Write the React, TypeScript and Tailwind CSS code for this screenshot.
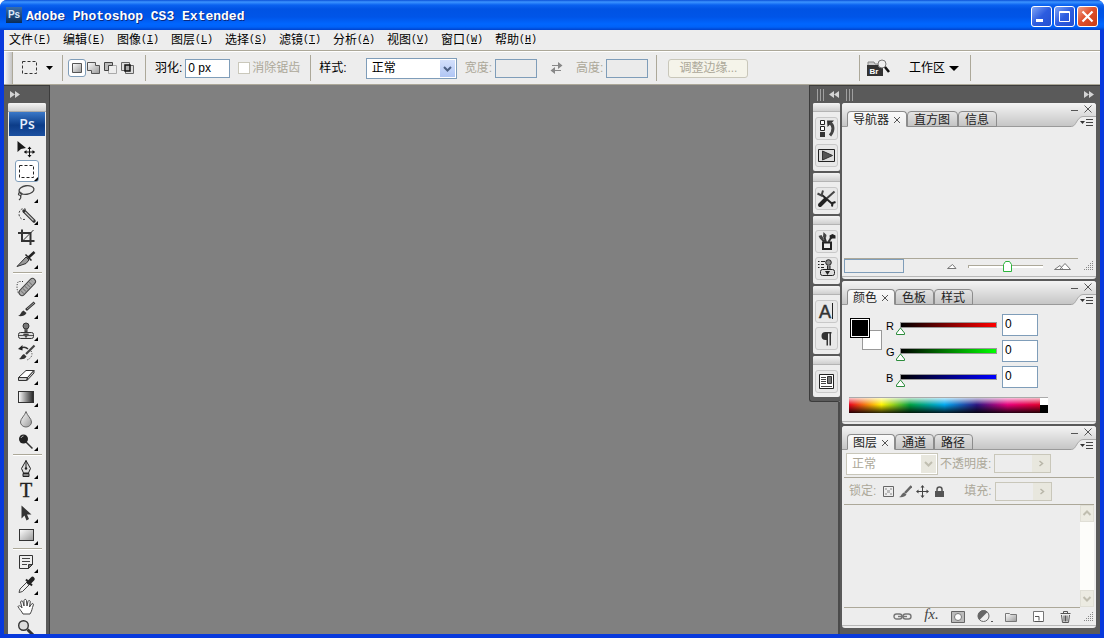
import React, { useState } from 'react';

const GRIP = 'bg-[linear-gradient(to_bottom,#f4f4f4,#cfcfcf)]';

const TOOLS: { name: string; corner: boolean; icon: React.ReactNode }[][] = [
  [
    {
      name: 'Move',
      corner: false,
      icon: (
        <>
          <path d="M2.500 3v11l3.500-3 5-1z" fill="#1a1a1a" />
          <path d="M14.500 9v10M9.500 14h10" stroke="#111" />
          <path d="M14.500 8.500l-2 2.500h4zM14.500 19.500l-2-2.500h4zM9 14l2.500-2v4zM20 14l-2.500-2v4z" fill="#111" />
        </>
      ),
    },
    {
      name: 'Marquee',
      corner: true,
      icon: <path d="M4.500 5.500h14v12h-14z" fill="none" stroke="#222" strokeDasharray="3 2" />,
    },
    {
      name: 'Lasso',
      corner: true,
      icon: (
        <>
          <ellipse cx="11.500" cy="8" rx="7.500" ry="4.300" fill="none" stroke="#444" strokeWidth="1.300" transform="rotate(-8 11.500 8)" />
          <path d="M5.500 10c-3 1-2.500 3.500 0 3.200 2.500-.4 1.500-3-.7-1.700M5.500 13.200c.8 1.800.3 3.300-1.500 4.800" fill="none" stroke="#444" strokeWidth="1.200" />
        </>
      ),
    },
    {
      name: 'Quick Selection',
      corner: true,
      icon: (
        <>
          <path d="M11 5.500c-3-2-7 0-7 4.500s4 6.500 7 5" fill="none" stroke="#444" strokeDasharray="2 1.500" />
          <path d="M9 7l10 10" stroke="#333" strokeWidth="3.400" strokeLinecap="round" />
          <path d="M10 8l8.500 8.500" stroke="#ccc" strokeWidth="1.300" />
        </>
      ),
    },
    {
      name: 'Crop',
      corner: false,
      icon: (
        <>
          <path d="M7 3.500v11.500h12.500M3 7h12.500v12" fill="none" stroke="#333" strokeWidth="2" />
          <path d="M18.500 4L8 14.500" stroke="#333" />
        </>
      ),
    },
    {
      name: 'Slice',
      corner: true,
      icon: (
        <>
          <path d="M2 18.500L11 9l3 3-3 3.500z" fill="#999" stroke="#333" />
          <path d="M13 10l6.500-6" stroke="#222" strokeWidth="2.600" />
          <path d="M10.500 6.500l6 6" stroke="#222" strokeWidth="1.500" />
        </>
      ),
    },
  ],
  [
    {
      name: 'Healing Brush',
      corner: true,
      icon: (
        <>
          <path d="M8 5.500H3.500c-2 2-2 8 0 12" fill="none" stroke="#222" strokeDasharray="1 1.500" />
          <path d="M7 16.500L17.500 5.500" stroke="#444" strokeWidth="7" strokeLinecap="round" />
          <path d="M7 16.500L17.500 5.500" stroke="#aaa" strokeWidth="5" strokeLinecap="round" />
          <path d="M7 16.500L17.500 5.500" stroke="#777" strokeWidth="4" strokeDasharray="1 2" />
        </>
      ),
    },
    {
      name: 'Brush',
      corner: true,
      icon: (
        <>
          <path d="M19.500 4.500L11 12" stroke="#333" strokeWidth="2.600" />
          <path d="M19 5l-7 6" stroke="#bbb" strokeWidth=".8" />
          <path d="M3 18c3-1 2.500-4 5.500-5.500L11.500 15c-1.500 3-5 3.500-8.500 3z" fill="#333" />
        </>
      ),
    },
    {
      name: 'Clone Stamp',
      corner: true,
      icon: (
        <>
          <circle cx="11" cy="6" r="3" fill="#777" stroke="#333" />
          <path d="M10 9v3h2V9" fill="#777" stroke="#333" />
          <rect x="3.500" y="12.500" width="15" height="6" rx="2" fill="#ddd" stroke="#333" />
          <path d="M4 15.500h14M8.500 14h5L11 17.500z" fill="#222" stroke="#555" />
        </>
      ),
    },
    {
      name: 'History Brush',
      corner: true,
      icon: (
        <>
          <path d="M19.500 3.500L11 12" stroke="#444" strokeWidth="2.200" />
          <path d="M4 17c2-1 2.500-4 5-5l2.500 2.500c-1.500 3-5 3-7.500 2.500z" fill="#333" />
          <path d="M13 7c-2-2-5-2-7-1" fill="none" stroke="#333" strokeWidth="1.500" />
          <path d="M3 7l4.500-4v5.500z" fill="#222" />
          <path d="M16 9c2 3 1 7-4 9" fill="none" stroke="#333" strokeDasharray="1 1.500" />
        </>
      ),
    },
    {
      name: 'Eraser',
      corner: true,
      icon: (
        <>
          <path d="M3.500 13.500L11 6.500h8l-6.500 7z" fill="#fff" stroke="#333" />
          <path d="M3.500 13.500v3h8l1-3zM12.500 13.500l6.500-7V9l-7 7.500z" fill="#ccc" stroke="#333" />
        </>
      ),
    },
    {
      name: 'Gradient',
      corner: true,
      icon: <rect x="3.500" y="5.500" width="15" height="11" fill="url(#tool-gradient)" stroke="#333" />,
    },
    {
      name: 'Blur',
      corner: true,
      icon: <path d="M11 3.500c-1 4-5.500 7-5.500 10.500a5.500 5 0 0 0 11 0c0-3.500-4.500-6.500-5.500-10.500z" fill="url(#tool-shade)" stroke="#666" />,
    },
    {
      name: 'Dodge',
      corner: true,
      icon: (
        <>
          <path d="M11 12l6.500 6.500" stroke="#333" strokeWidth="1.500" />
          <circle cx="8.500" cy="9" r="4.500" fill="#222" />
          <path d="M6 8a3 3 0 0 1 2.500-2" stroke="#aaa" fill="none" />
        </>
      ),
    },
  ],
  [
    {
      name: 'Pen',
      corner: true,
      icon: (
        <>
          <path d="M11 2.500v8M11 2.500l4.500 8-2 4.500h-5l-2-4.500z" fill="#ddd" stroke="#222" />
          <circle cx="11" cy="10.500" r="1.200" fill="#222" />
          <path d="M8 15.500h6v3H8z" fill="#888" stroke="#222" />
        </>
      ),
    },
    {
      name: 'Type',
      corner: true,
      icon: (
        <text x="11" y="17" textAnchor="middle" fill="#222" stroke="#222" strokeWidth=".4" className="font-['Liberation_Serif',serif] text-[20px]">
          T
        </text>
      ),
    },
    { name: 'Path Selection', corner: true, icon: <path d="M6.500 3.500v13l3-3 2 5 2.500-1.500-2-4.500h4.500z" fill="#333" /> },
    { name: 'Rectangle', corner: true, icon: <rect x="4.500" y="5.500" width="14" height="11" fill="url(#tool-shade)" stroke="#333" /> },
  ],
  [
    {
      name: 'Notes',
      corner: true,
      icon: (
        <>
          <path d="M4.500 3.500h13v9l-4 4h-9z" fill="#eee" stroke="#333" />
          <path d="M17.500 12.500h-4v4z" fill="#777" stroke="#333" />
          <path d="M7 6.500h8M7 9.500h8M7 12.500h5" stroke="#444" />
        </>
      ),
    },
    {
      name: 'Eyedropper',
      corner: true,
      icon: (
        <>
          <path d="M4 18.500l1-3.500 8-8 2.500 2.500-8 8z" fill="#eee" stroke="#444" />
          <path d="M11 5.500l6 6" stroke="#222" strokeWidth="2" />
          <path d="M14 8.500L17.500 5" stroke="#222" strokeWidth="4.500" strokeLinecap="round" />
        </>
      ),
    },
    {
      name: 'Hand',
      corner: false,
      icon: (
        <path
          d="M8 18c-1.500-3-3.500-4.500-5-7.500 1-1.500 2.500-.5 4 1.500L5.500 6c.5-1.500 2-1.500 2.500 0l1 4L9 4.500c.5-1.500 2-1.500 2.500 0l.5 5.500 1-4.500c.5-1.500 2-1 2.300 0L14.500 11l2-3c1-1 2.300-.5 1.800 1-1.300 3.500-1.300 6-3.300 9z"
          fill="#fff"
          stroke="#444"
        />
      ),
    },
    {
      name: 'Zoom',
      corner: false,
      icon: (
        <>
          <circle cx="8.500" cy="7.500" r="4.800" fill="#ddd" stroke="#333" strokeWidth="1.400" />
          <path d="M12.500 11.500l6 6" stroke="#333" strokeWidth="3" />
        </>
      ),
    },
  ],
];

const DOCK: { name: string; icon: React.ReactNode }[][] = [
  [
    {
      name: 'History',
      icon: (
        <>
          <path d="M4.500 2.500h4v4h-4zM4.500 8.500h4v4h-4z" fill="#fff" stroke="#222" />
          <path d="M4 14h5v5H4z" fill="#333" />
          <path d="M11 2.500h7L11.500 9z" fill="#333" />
          <path d="M13.500 5c4.500 1.500 4.500 8 .5 12.500" fill="none" stroke="#444" strokeWidth="3" />
        </>
      ),
    },
    {
      name: 'Actions',
      icon: (
        <>
          <path d="M2.500 4.500h16v12h-16z" fill="#ddd" stroke="#222" />
          <path d="M6.500 6v9l10-4.500z" fill="#555" stroke="#333" />
        </>
      ),
    },
  ],
  [
    {
      name: 'Tool Presets',
      icon: (
        <>
          <path d="M6 7l11 9.500" stroke="#222" strokeWidth="2" />
          <path d="M18.500 3.500L9 12" stroke="#444" strokeWidth="2" />
          <path d="M9.500 11.500L4 17" stroke="#222" strokeWidth="4" strokeLinecap="round" />
          <path d="M1.500 5.500l4 2L7 2.500" fill="none" stroke="#444" strokeWidth="2" />
          <path d="M19.500 14l-3 1-.5 3.500" fill="none" stroke="#222" strokeWidth="2" />
        </>
      ),
    },
  ],
  [
    {
      name: 'Brushes',
      icon: (
        <>
          <path d="M7 11.500h8v6.500H7z" fill="#eee" stroke="#222" strokeWidth="2" />
          <path d="M8.500 11L4 6M10 11L8 5M12.500 11l3-5" stroke="#333" strokeWidth="2" />
          <path d="M2.500 5l3-1 2.500 4-2.500 1zM7 5.500l.5-4.500 3 3-.5 3z" fill="#444" />
          <path d="M13.500 4.500l3-1.500 3 1.500v3h-3L14 8z" fill="#222" />
        </>
      ),
    },
    {
      name: 'Clone Source',
      icon: (
        <>
          <path d="M2 3.500h1.500M5 3.500h4M2 6.500h1.500M5 6.500h3M2 9.500h1.500M5 9.500h3" stroke="#222" />
          <circle cx="12.500" cy="4.500" r="2.800" fill="#888" stroke="#222" />
          <path d="M11.500 7.500v4H14v-4" fill="#888" stroke="#222" />
          <rect x="4.500" y="11.500" width="14" height="6" rx="2" fill="#ddd" stroke="#222" />
          <path d="M9 13h5l-2.500 4z" fill="#222" />
        </>
      ),
    },
  ],
  [
    {
      name: 'Character',
      icon: (
        <>
          <text x="9" y="17" textAnchor="middle" fill="#333" stroke="#333" strokeWidth=".5" className="font-['Liberation_Sans',sans-serif] text-[18px]">
            A
          </text>
          <path d="M16.500 2v16" stroke="#222" />
        </>
      ),
    },
    { name: 'Paragraph', icon: <path d="M15.500 4h-6a4 4 0 0 0 0 8h1v5.500H12V5.500h1.500v12H15V5.500h.5z" fill="#333" /> },
  ],
  [
    {
      name: 'Layer Comps',
      icon: (
        <>
          <path d="M3.500 3.500h14v14h-14z" fill="#fff" stroke="#222" />
          <path d="M5 6.500h5M5 8.500h5M5 10.500h5M5 12.500h5M5 15.500h11" stroke="#444" />
          <path d="M11.500 5.500h4v7h-4z" fill="#777" stroke="#333" />
        </>
      ),
    },
  ],
];

const MENUS = [
  ['文件', 'F'],
  ['编辑', 'E'],
  ['图像', 'I'],
  ['图层', 'L'],
  ['选择', 'S'],
  ['滤镜', 'T'],
  ['分析', 'A'],
  ['视图', 'V'],
  ['窗口', 'W'],
  ['帮助', 'H'],
];

const CHANNELS = [
  { name: 'R', bar: 'bg-[linear-gradient(to_right,#000,#f00)]' },
  { name: 'G', bar: 'bg-[linear-gradient(to_right,#000,#0f0)]' },
  { name: 'B', bar: 'bg-[linear-gradient(to_right,#000,#00f)]' },
];

function DoubleArrow({ left = false }: { left?: boolean }) {
  return (
    <svg width="10" height="7" viewBox="0 0 10 7" fill="#d4d4d4" className={left ? 'rotate-180' : ''}>
      <path d="M0 0l5 3.500L0 7zM5 0l5 3.500L5 7z" />
    </svg>
  );
}

function DockGrip() {
  return (
    <svg width="7" height="12" viewBox="0 0 7 12" stroke="#a0a0a0">
      <path d="M.5 0v12M3.500 0v12M6.500 0v12" />
    </svg>
  );
}

function SizeGrip() {
  return (
    <svg width="10" height="10" viewBox="0 0 10 10" stroke="#888" strokeDasharray="1 1">
      <path d="M9.500 0v10M7.500 2v8M5.500 4v6M3.500 6v4M1.500 8v2" />
    </svg>
  );
}

function TitleBar() {
  return (
    <header className="flex h-[30px] shrink-0 items-center bg-[linear-gradient(to_bottom,#0a50d8_0,#3c94ff_2px,#0a62f0_5px,#0053e4_9px,#0055e8_17px,#0066ff_24px,#0062f8_27px,#0042cc_30px)] pt-[3px] pr-[6px] pl-[6px]">
      <div className="mr-1 mb-1 flex size-4 items-center justify-center bg-[linear-gradient(#3a6ea8,#0a2c58)] text-[10px] font-bold text-[#dce8f8]">Ps</div>
      <h1 className="flex-1 font-['Liberation_Mono','Noto_Sans_CJK_SC',monospace] text-[13px] font-bold whitespace-nowrap text-white [text-shadow:1px_1px_#0a2a80]">
        Adobe Photoshop CS3 Extended
      </h1>
      <div className="flex gap-[2px]">
        <button aria-label="Minimize" className="size-[21px] rounded-[3px] border border-white bg-[linear-gradient(135deg,#7fa4f5,#2c5ce0_50%,#2450d0)]">
          <svg viewBox="0 0 19 19">
            <path d="M4 12h7v3H4z" fill="#fff" />
          </svg>
        </button>
        <button aria-label="Maximize" className="size-[21px] rounded-[3px] border border-white bg-[linear-gradient(135deg,#7fa4f5,#2c5ce0_50%,#2450d0)]">
          <svg viewBox="0 0 19 19" fill="none" stroke="#fff">
            <path d="M4.500 4.500h10v10h-10zM4 5.500h11" />
          </svg>
        </button>
        <button aria-label="Close" className="size-[21px] rounded-[3px] border border-white bg-[linear-gradient(135deg,#f0a08a,#e0502c_45%,#c83c14)]">
          <svg viewBox="0 0 19 19" stroke="#fff" strokeWidth="2.200">
            <path d="M4.500 4.500l10 10M14.500 4.500l-10 10" />
          </svg>
        </button>
      </div>
    </header>
  );
}

function MenuBar() {
  return (
    <nav className="flex h-[21px] shrink-0 items-center gap-3 border-b border-[#aca899] bg-[#ededed] pl-[5px]">
      {MENUS.map(([label, key]) => (
        <button key={key} className="flex w-[42px] items-center whitespace-nowrap">
          {label}
          <span className="font-['Liberation_Mono',monospace] text-[10px]">
            (<u>{key}</u>)
          </span>
        </button>
      ))}
    </nav>
  );
}

function Separator() {
  return <div className="h-[26px] w-px shrink-0 bg-[#aca899]" />;
}

function OptionsBar() {
  const [feather, setFeather] = useState('0 px');

  return (
    <div className="flex h-[34px] shrink-0 items-center border-t border-b border-t-white border-b-[#aca899] bg-[#ededed] whitespace-nowrap">
      <div className="h-full w-[9px] shrink-0 border-r border-[#aca899] bg-[linear-gradient(to_right,#f8f8f8,#c4c4c4)]" />
      <button aria-label="Tool preset" className="mr-[9px] ml-[9px] flex items-center gap-2">
        <svg width="16" height="16" viewBox="0 0 16 16" fill="none" stroke="#333" strokeDasharray="3 2">
          <path d="M.5 1.500h14v12H.5z" />
        </svg>
        <svg width="7" height="4" viewBox="0 0 7 4">
          <path d="M0 0h7L3.500 4z" />
        </svg>
      </button>
      <Separator />
      <div className="mr-[10px] ml-[5px] flex items-center gap-[3px]">
        <button aria-label="New selection" className="-mr-[2px] flex size-[18px] items-center justify-center rounded-[3px] border border-[#7f9db9] bg-white">
          <svg width="12" height="12" viewBox="0 0 12 12">
            <path d="M1.500 1.500h9v9h-9z" fill="url(#tool-shade)" stroke="#555" />
          </svg>
        </button>
        <button aria-label="Add to selection">
          <svg width="14" height="14" viewBox="0 0 14 14">
            <path d="M.5 1.500h8v3h4v8h-8v-3h-4z" fill="url(#tool-shade)" stroke="#555" />
          </svg>
        </button>
        <button aria-label="Subtract from selection">
          <svg width="14" height="14" viewBox="0 0 14 14">
            <path d="M4.500 4.500h8v8h-8z" fill="#eee" stroke="#aaa" />
            <path d="M.5 1.500h8v3h-4v5h-4z" fill="#bbb" stroke="#444" />
          </svg>
        </button>
        <button aria-label="Intersect with selection">
          <svg width="14" height="14" viewBox="0 0 14 14">
            <path d="M.5 1.500h8v8h-8zM4.500 4.500h8v8h-8z" fill="#ddd" stroke="#666" />
            <path d="M4 4h5v6H4z" fill="#aaa" stroke="#111" strokeWidth="1.500" />
          </svg>
        </button>
      </div>
      <Separator />
      <label className="mr-2 ml-[9px] flex items-center gap-[3px]">
        羽化:
        <input value={feather} onChange={e => setFeather(e.target.value)} className="h-[19px] w-[45px] border border-[#7f9db9] bg-white px-[2px]" />
      </label>
      <label className="mr-[10px] flex items-center gap-[2px] text-[#aca899]">
        <input type="checkbox" disabled className="size-3 appearance-none border border-[#cac8bb] bg-white" />
        消除锯齿
      </label>
      <Separator />
      <label className="mr-2 ml-2 flex items-center gap-[19px]">
        样式:
        <span className="relative">
          <select className="block h-[21px] w-[91px] appearance-none border border-[#7f9db9] bg-white px-[5px]">
            <option>正常</option>
          </select>
          <svg className="pointer-events-none absolute top-[2px] right-[2px] bg-[linear-gradient(#d4e0fc,#b0c6f4)]" width="15" height="17" viewBox="0 0 15 17" fill="none" stroke="#4d6185" strokeWidth="2">
            <path d="M4 7l3.500 3.500L11 7" />
          </svg>
        </span>
      </label>
      <label className="flex items-center gap-[3px] text-[#aca899]">
        宽度:
        <input disabled className="h-[19px] w-[42px] border border-[#7f9db9] bg-[#ebebeb]" />
      </label>
      <button aria-label="Swap width and height" disabled className="mx-[13px]">
        <svg width="13" height="12" viewBox="0 0 13 12" stroke="#888" fill="#888">
          <path d="M2 3.500h8M3 8.500h8" />
          <path d="M8 0l4.500 3.500L8 7zM5 5L.5 8.500 5 12z" stroke="none" />
        </svg>
      </button>
      <label className="mr-2 flex items-center gap-[3px] text-[#aca899]">
        高度:
        <input disabled className="h-[19px] w-[42px] border border-[#7f9db9] bg-[#ebebeb]" />
      </label>
      <Separator />
      <button disabled className="ml-[11px] h-[19px] w-20 rounded-[3px] border border-[#c9c7ba] bg-[#f5f4ea] leading-none text-[#aca899]">
        调整边缘...
      </button>
      <div className="mr-[129px] ml-auto flex items-center">
        <Separator />
        <button aria-label="Go to Bridge" className="ml-[7px]">
          <svg width="23" height="18" viewBox="0 0 23 18">
            <path d="M1 3h6l1 2h7v3H1z" fill="#ccc" stroke="#888" />
            <path d="M0 6h16v11H0z" fill="#333" />
            <text x="2.500" y="15" fill="#fff" className="font-['Liberation_Sans',sans-serif] text-[8px] font-bold">
              Br
            </text>
            <circle cx="15" cy="5" r="4" fill="#eee" stroke="#777" />
            <path d="M18 8l4 5" stroke="#111" strokeWidth="2.500" />
          </svg>
        </button>
        <button className="mr-[11px] ml-[19px] flex items-center gap-1">
          工作区
          <svg width="10" height="5" viewBox="0 0 10 5">
            <path d="M0 0h10L5 5z" />
          </svg>
        </button>
        <Separator />
      </div>
    </div>
  );
}

function Toolbox() {
  const [active, setActive] = useState('Marquee');

  return (
    <aside className="flex w-[46px] shrink-0 flex-col overflow-hidden border-t border-r border-[#3c3c3c] bg-[#5a5a5a] pr-[3px] pl-1">
      <button aria-label="Expand tools" className="flex h-[17px] shrink-0 items-center pl-[2px]">
        <DoubleArrow />
      </button>
      <div className="flex flex-1 flex-col items-center rounded-t-[2px] bg-[#ededed]">
        <div className={`h-[9px] w-full shrink-0 rounded-t-[2px] border-b border-[#aaa] ${GRIP}`} />
        <div className="mb-[2px] flex h-6 w-9 shrink-0 items-center justify-center bg-[linear-gradient(to_bottom,#3a78c8,#0c3c88_55%,#1c50a0)] font-['Open_Sans',sans-serif] text-[14px] font-semibold text-[#e4eefc]">
          Ps
        </div>
        {TOOLS.map((group, i) => (
          <React.Fragment key={i}>
            {i > 0 && <div className="my-[2px] h-[2px] w-[29px] shrink-0 border-t border-[#aca899] bg-white" />}
            {group.map(tool => (
              <button
                key={tool.name}
                aria-label={tool.name}
                onClick={() => setActive(tool.name)}
                className={`h-[22px] w-6 shrink-0 rounded-[3px] ${active === tool.name ? 'bg-white outline outline-[#7f9db9] -outline-offset-1' : ''}`}
              >
                <svg width="24" height="22" viewBox="0 0 24 22">
                  {tool.icon}
                  {tool.corner && <path d="M23 17v4h-4z" />}
                </svg>
              </button>
            ))}
          </React.Fragment>
        ))}
      </div>
    </aside>
  );
}

function Dock() {
  return (
    <div className="flex w-[31px] flex-col">
      <div className="rounded-b-[3px] border border-t-0 border-r-0 border-[#3c3c3c] bg-[#5a5a5a] pb-1 pl-[3px]">
        <div className="flex h-[17px] items-center gap-[5px] pl-1">
          <DockGrip />
          <DoubleArrow left />
        </div>
        <div className="flex flex-col gap-[2px]">
          {DOCK.map((group, i) => (
            <div key={i} className="flex flex-col items-center gap-1 rounded-[2px] bg-[#ededed] pb-1">
              <div className={`mb-px h-[9px] w-full rounded-t-[2px] border-b border-[#b4b4b4] ${GRIP}`} />
              {group.map(item => (
                <button key={item.name} aria-label={item.name} className="size-[23px] rounded-[3px] border border-[#c8c8c8] bg-[#e8e8e8]">
                  <svg width="21" height="21" viewBox="0 0 21 21">
                    {item.icon}
                  </svg>
                </button>
              ))}
            </div>
          ))}
        </div>
      </div>
      <div className="flex-1 border-r-2 border-[#4a4a4a]" />
    </div>
  );
}

function Panel({ tabs, className = '', children }: { tabs: string[]; className?: string; children: React.ReactNode }) {
  const [active, setActive] = useState(tabs[0]);

  return (
    <section className={`flex flex-col rounded-[3px] bg-[#ededed] ${className}`}>
      <div className="flex h-6 shrink-0 items-end justify-between rounded-t-[3px] border-b border-[#9a9a9a] bg-[linear-gradient(to_bottom,#f4f4f4,#c6c6c6)] pl-[5px]">
        <div className="-mb-px flex">
          {tabs.map(tab => (
            <button
              key={tab}
              onClick={() => setActive(tab)}
              className={`flex h-4 items-center gap-1 rounded-t-[4px] border border-[#8c8c8c] pt-[2px] leading-none whitespace-nowrap text-[#222] ${
                tab === active ? 'border-b-[#ededed] bg-[linear-gradient(#fafafa,#ededed)] px-[5px]' : 'bg-[linear-gradient(#e4e4e4,#c4c4c4)] pr-[7px] pl-[6px]'
              }`}
            >
              {tab}
              {tab === active && (
                <svg width="8" height="8" viewBox="0 0 8 8" stroke="#555">
                  <path d="M1 1l6 6M7 1L1 7" />
                </svg>
              )}
            </button>
          ))}
        </div>
        <div className="-mb-px flex h-[22px] flex-col items-end justify-between">
          <div className="flex items-center gap-[6px] pr-1">
            <button aria-label="Minimize panel">
              <svg width="7" height="8" viewBox="0 0 7 8" stroke="#555">
                <path d="M0 5.500h7" />
              </svg>
            </button>
            <button aria-label="Close panel">
              <svg width="8" height="8" viewBox="0 0 8 8" stroke="#555">
                <path d="M.5 .5l7 7M7.500 .5l-7 7" />
              </svg>
            </button>
          </div>
          <button aria-label="Panel menu">
            <svg width="25" height="11" viewBox="0 0 25 11">
              <path d="M0 10.500c3 0 4-2 5.500-4.500S9 .5 12 .5h13v10.500H0z" fill="#ededed" />
              <path d="M0 10.500c3 0 4-2 5.500-4.500S9 .5 12 .5h13" fill="none" stroke="#aaa" />
              <path d="M9 5h5l-2.500 3z" fill="#333" />
              <path d="M15 3.500h7M15 6.500h7M15 9.500h7" stroke="#444" />
            </svg>
          </button>
        </div>
      </div>
      {children}
    </section>
  );
}

function NavigatorPanel() {
  return (
    <Panel tabs={['导航器', '直方图', '信息']} className="h-[176px] shrink-0">
      <div className="mr-[18px] ml-[2px] h-[132px] border-b border-[#aca899]" />
      <div className="flex items-center pr-[3px] pl-[2px]">
        <input aria-label="Zoom" className="h-[14px] w-[60px] border border-[#7f9db9]" />
        <div className="ml-auto flex items-center gap-[11px]">
          <svg width="10" height="6" viewBox="0 0 10 6" fill="#fff" stroke="#777">
            <path d="M.5 5.500L5.500 1.500 9 5.500z" />
          </svg>
          <span className="relative flex h-[14px] w-[75px] items-center">
            <input type="range" aria-label="Zoom level" className="h-[3px] w-full appearance-none border-t border-l border-[#aca899] bg-white [&::-webkit-slider-thumb]:opacity-0" />
            <svg className="pointer-events-none absolute top-[2px] left-[35px]" width="9" height="11" viewBox="0 0 9 11" fill="#fff" stroke="#2cb43c">
              <path d="M.5 10.500v-7l2-3h4l2 3v7z" />
            </svg>
          </span>
          <svg width="18" height="7" viewBox="0 0 18 7" fill="#fff" stroke="#777">
            <path d="M.5 6.500l5.500-4 3 4zM5.500 6.500L11 .5l5.500 6z" />
          </svg>
          <SizeGrip />
        </div>
      </div>
      <div className="mt-auto mb-[2px] h-px bg-[#b8b8b8]" />
    </Panel>
  );
}

function ColorPanel() {
  const [values, setValues] = useState(['0', '0', '0']);

  return (
    <Panel tabs={['颜色', '色板', '样式']} className="h-[143px] shrink-0">
      <div className="mt-[9px] flex pl-2">
        <div className="relative mt-1 h-[32px] w-[32px] shrink-0">
          <button aria-label="Background color" className="absolute right-0 bottom-0 size-5 border border-[#999] bg-white" />
          <button aria-label="Foreground color" className="absolute top-0 left-0 size-5 border border-black bg-black outline outline-white -outline-offset-2" />
        </div>
        <div className="ml-1 flex flex-col gap-1">
          {CHANNELS.map((channel, i) => (
            <label key={channel.name} className="flex h-[22px] items-center text-[11px]">
              <span className="w-[14px] pt-[2px]">{channel.name}</span>
              <span className="relative mr-[5px] block h-[22px] w-[97px]">
                <span className={`mt-2 block h-[6px] border border-[#999] ${channel.bar}`} />
                <svg className="absolute top-[13px] -left-1" width="9" height="8" viewBox="0 0 9 8" fill="#fff" stroke="#2c8c3c">
                  <path d="M.5 7.500V6l4-5 4 5v1.500z" />
                </svg>
              </span>
              <input
                value={values[i]}
                onChange={e => setValues(values.map((v, j) => (j === i ? e.target.value : v)))}
                className="h-[22px] w-9 border border-[#7f9db9] bg-white px-[2px] pb-[2px] text-[12px]"
              />
            </label>
          ))}
        </div>
      </div>
      <div className="mt-[9px] ml-[7px] flex h-4 w-[199px] border-t border-[#aaa]">
        <div className="flex-1 bg-[linear-gradient(to_right,#e8001c,#fff200_17%,#00a040_32%,#00a8f0_50%,#2c1480_67%,#e8007c_83%,#e0002c)]">
          <div className="h-full bg-[linear-gradient(to_bottom,rgba(255,255,255,0.75),transparent_45%,rgba(0,0,0,0.85))]" />
        </div>
        <div className="w-2 bg-[linear-gradient(#fff_50%,#000_50%)]" />
      </div>
      <div className="mt-auto mb-[2px] h-px bg-[#b8b8b8]" />
    </Panel>
  );
}

function DisabledSpin({ label }: { label: string }) {
  return (
    <label className="flex items-center gap-[3px]">
      {label}
      <span className="relative">
        <input disabled className="block h-[19px] w-[57px] border border-[#c9c7ba]" />
        <svg className="pointer-events-none absolute top-px right-px bg-[#e8e7de]" width="18" height="17" viewBox="0 0 18 17" fill="none" stroke="#b8b6a8" strokeWidth="1.500">
          <path d="M7.500 6l3 2.500-3 2.500" />
        </svg>
      </span>
    </label>
  );
}

function LayersPanel() {
  return (
    <Panel tabs={['图层', '通道', '路径']} className="min-h-0 flex-1">
      <div className="mr-[2px] ml-[2px] flex h-7 shrink-0 items-center gap-[2px] border-b border-[#aca899] pl-[2px] text-[#aca899]">
        <span className="relative">
          <select aria-label="Blend mode" disabled className="block h-[22px] w-[92px] appearance-none border border-[#c9c7ba] bg-white px-[5px] text-[#aca899] opacity-100">
            <option>正常</option>
          </select>
          <svg className="pointer-events-none absolute top-[2px] right-[2px] bg-[#e8e7de]" width="15" height="18" viewBox="0 0 15 18" fill="none" stroke="#c0beb0" strokeWidth="2">
            <path d="M4 7l3.500 3.500L11 7" />
          </svg>
        </span>
        <DisabledSpin label="不透明度:" />
      </div>
      <div className="mr-[2px] ml-[2px] flex h-[27px] shrink-0 items-center border-b border-[#aca899] pl-[5px] text-[#aca899]">
        锁定:
        <div className="mr-[18px] ml-[6px] flex items-center gap-1">
          <button aria-label="Lock transparency">
            <svg width="13" height="13" viewBox="0 0 13 13">
              <path d="M1.500 1.500h10v10h-10z" fill="#eee" stroke="#666" />
              <path d="M3 3h2v2H3zM8 3h2v2H8zM5 5h3v3H5zM3 8h2v2H3zM8 8h2v2H8z" fill="#bbb" />
            </svg>
          </button>
          <button aria-label="Lock pixels">
            <svg width="13" height="13" viewBox="0 0 13 13">
              <path d="M12.500 1L6 8" stroke="#666" strokeWidth="2.500" />
              <path d="M0 12c2 0 2-3 5-4.500L7.500 9.500C6 12 3 12.500 0 12z" fill="#666" />
            </svg>
          </button>
          <button aria-label="Lock position">
            <svg width="13" height="13" viewBox="0 0 13 13">
              <path d="M6.500 1v11M1 6.500h11" stroke="#444" />
              <path d="M6.500 0l2 2.500h-4zM6.500 13l2-2.500h-4zM0 6.500l2.500-2v4zM13 6.500l-2.500-2v4z" fill="#444" />
            </svg>
          </button>
          <button aria-label="Lock all">
            <svg width="13" height="13" viewBox="0 0 13 13">
              <path d="M4 7V4.500a2.500 2.500 0 0 1 5 0V7" fill="none" stroke="#555" strokeWidth="1.500" />
              <path d="M2 6h9v6H2z" fill="#555" />
            </svg>
          </button>
        </div>
        <DisabledSpin label="填充:" />
      </div>
      <div className="mr-[2px] flex flex-1 justify-end">
        <div className="flex w-[14px] flex-col justify-between bg-[#fdfdfa]">
          <button aria-label="Scroll up" disabled className="h-[17px] border border-[#e0dfd6] bg-[#ecebe2]">
            <svg viewBox="0 0 12 15" fill="none" stroke="#c0beb0" strokeWidth="2">
              <path d="M2.500 9L6 5.500 9.500 9" />
            </svg>
          </button>
          <button aria-label="Scroll down" disabled className="h-[17px] border border-[#e0dfd6] bg-[#ecebe2]">
            <svg viewBox="0 0 12 15" fill="none" stroke="#c0beb0" strokeWidth="2">
              <path d="M2.500 6L6 9.500 9.500 6" />
            </svg>
          </button>
        </div>
      </div>
      <div className="mr-4 ml-[2px] h-px shrink-0 bg-[#aca899]" />
      <div className="flex h-[17px] shrink-0 items-center justify-end gap-3 pr-[3px]">
        <button aria-label="Link layers">
          <svg width="19" height="10" viewBox="0 0 19 10" fill="none" stroke="#777" strokeWidth="1.400">
            <rect x="1" y="2" width="8" height="5" rx="2.500" />
            <rect x="10" y="2" width="8" height="5" rx="2.500" />
            <path d="M5 4.500h9" />
          </svg>
        </button>
        <button aria-label="Layer style" className="w-[15px] pb-1 font-['Liberation_Serif',serif] text-[15px] leading-none text-[#444] italic">
          fx.
        </button>
        <button aria-label="Layer mask">
          <svg width="14" height="12" viewBox="0 0 14 12">
            <path d="M.5 .5h13v11H.5z" fill="#bbb" stroke="#666" />
            <circle cx="7" cy="6" r="3.500" fill="#fff" stroke="#777" />
          </svg>
        </button>
        <button aria-label="Adjustment layer">
          <svg width="16" height="13" viewBox="0 0 16 13">
            <circle cx="6.500" cy="6" r="5.500" fill="#eee" stroke="#666" />
            <path d="M2.500 10a5.500 5.500 0 0 1 8-8z" fill="#666" />
            <path d="M14 11h2v1h-2z" fill="#555" />
          </svg>
        </button>
        <button aria-label="New group">
          <svg width="12" height="10" viewBox="0 0 12 10">
            <path d="M.5 1.500h4l1 1h6v7H.5z" fill="url(#tool-shade)" stroke="#777" />
          </svg>
        </button>
        <button aria-label="New layer" className="ml-1">
          <svg width="11" height="11" viewBox="0 0 11 11">
            <path d="M.5 .5h10v10H.5z" fill="#fff" stroke="#777" />
            <path d="M2 5.500h4v4M10 10.500H2" fill="none" stroke="#555" />
          </svg>
        </button>
        <button aria-label="Delete layer" className="ml-1">
          <svg width="11" height="12" viewBox="0 0 11 12" fill="none" stroke="#555">
            <path d="M.5 2.500h10M3.500 2V.5h4V2M1.500 4l1 7.500h6l1-7.500M4 4.500v6M5.500 4.500v6M7 4.500v6" />
          </svg>
        </button>
        <SizeGrip />
      </div>
      <div className="mb-[2px] h-px shrink-0 bg-[#b8b8b8]" />
    </Panel>
  );
}

export default function App() {
  return (
    <div className="flex h-screen flex-col overflow-hidden rounded-t-[7px] bg-[#0839dc] pb-1 font-['Liberation_Sans','Noto_Sans_CJK_SC',sans-serif] text-[12px] leading-4 text-black">
      <svg width="0" height="0" className="absolute">
        <linearGradient id="tool-gradient">
          <stop offset="0" stopColor="#fff" />
          <stop offset="1" stopColor="#222" />
        </linearGradient>
        <linearGradient id="tool-shade" x2="1" y2="1">
          <stop offset="0" stopColor="#fff" />
          <stop offset="1" stopColor="#999" />
        </linearGradient>
      </svg>
      <TitleBar />
      <div className="flex min-h-0 flex-1 flex-col border-x-4 border-[#0839dc]">
        <MenuBar />
        <OptionsBar />
        <div className="flex min-h-0 flex-1">
          <Toolbox />
          <main className="flex-1 bg-[#808080]" />
          <div className="flex border-t border-[#3c3c3c] bg-[#808080]">
            <Dock />
            <div className="flex w-[260px] flex-col bg-[#5a5a5a] pr-1 pb-[6px] pl-[2px]">
              <div className="flex h-[17px] shrink-0 items-center justify-between pr-[2px] pl-1">
                <DockGrip />
                <DoubleArrow />
              </div>
              <div className="flex min-h-0 flex-1 flex-col gap-[2px]">
                <NavigatorPanel />
                <ColorPanel />
                <LayersPanel />
              </div>
            </div>
          </div>
        </div>
      </div>
    </div>
  );
}
